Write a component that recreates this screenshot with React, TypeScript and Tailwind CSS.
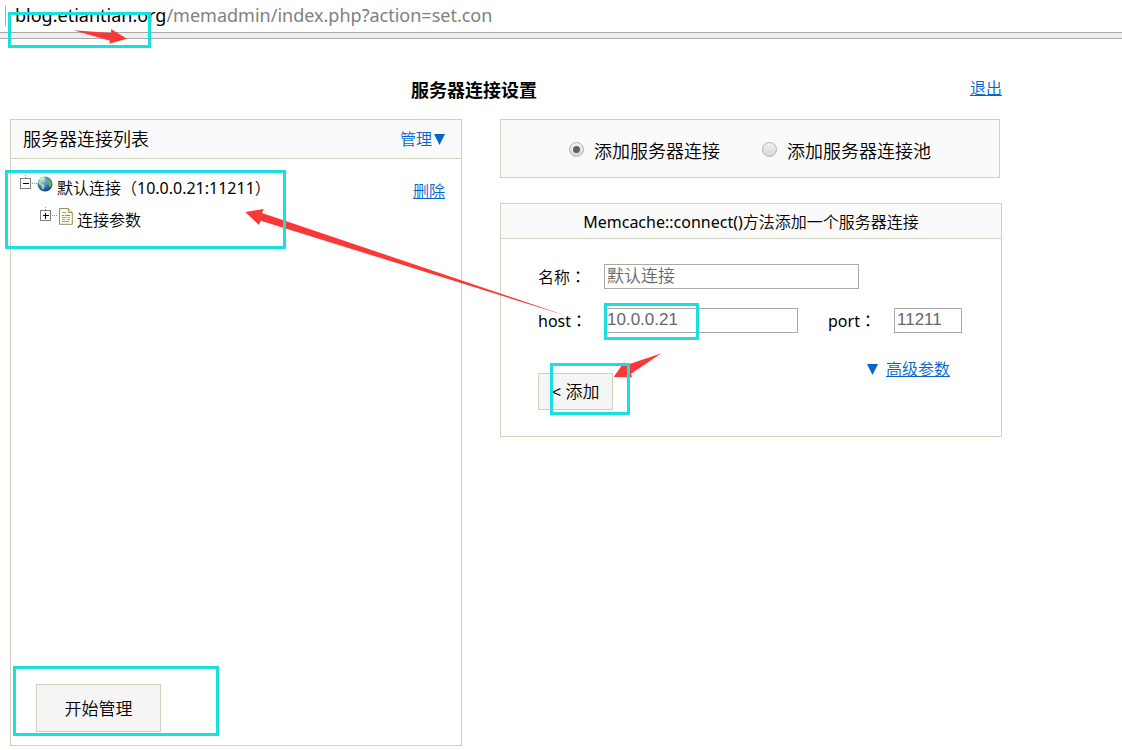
import type { ReactNode } from "react";

const link = "text-base text-[#0066cc]";
const field =
  "h-[25px] border border-[#a9a9a9] bg-white pl-[2px] font-['Liberation_Sans','Noto_Sans_CJK_SC_DemiLight','Noto_Sans_CJK_SC',sans-serif] text-[17px] text-[#666] outline-none";
const panel = "border border-[#d0d1bc]";

function AddressBar() {
  return (
    <header>
      <div className="flex h-8 items-center pl-[5px] text-lg leading-8">
        <span className="h-5 border-l border-[#a9a9a9] pl-[9px]" />
        <span className="whitespace-nowrap pb-[2px] text-black">
          blog.etiantian.org
          <span className="text-[#808080]">/memadmin/index.php?action=set.con</span>
        </span>
      </div>
      <div className="h-[7px] border-y border-[#a9a9a9] bg-[#f0f0f0]" />
    </header>
  );
}

function Toggle({ open }: { open?: boolean }) {
  return (
    <svg width="18" height="20" viewBox="0 0 18 20" shapeRendering="crispEdges">
      <path d="M6.5 0v4M13 8.5h5" stroke="#999" strokeDasharray="1 1" />
      <rect x="1.5" y="3.5" width="10" height="10" fill="#fff" stroke="#808080" />
      <path d={open ? "M4 8.5h6" : "M4 8.5h6M6.5 6v6"} stroke="#000" strokeWidth="1" />
    </svg>
  );
}

function Globe() {
  return (
    <svg width="16" height="18" viewBox="0 -1 16 18">
      <defs>
        <radialGradient id="sea" cx="0.35" cy="0.25" r="0.8">
          <stop offset="0" stopColor="#a9cdf2" />
          <stop offset="0.5" stopColor="#3c7fd0" />
          <stop offset="1" stopColor="#123c86" />
        </radialGradient>
      </defs>
      <circle cx="8" cy="8" r="7.5" fill="url(#sea)" />
      <path d="M1.5 5 4 2l3-.8 2 .7-1.5 1.5.2 1.3-2 1.5-1.5.3.6 1.2 1.9.6 1.3 1.7-1.2 1.9-.9 2-1-1.8-.4-2.1L3 8.8 1.5 7.5z" fill="#a6dc8d" />
      <path d="m10.5 3 2 .2 1.6 2.2.5 2.8-1 2.8-1.3.3-.5-2.2-1.8-1.4.1-2.2z" fill="#62b548" />
      <path d="m3 3.5 2.5-2 2.3.1L5.5 4.5z" fill="#e4f4ee" opacity=".8" />
    </svg>
  );
}

function Page() {
  return (
    <svg width="16" height="18" viewBox="-2 -1 16 18">
      <path d="M.5.5h8.8l4 4v11.8H.5z" fill="#fffdf0" stroke="#a08c5b" />
      <path d="M9.3.5v4h4" fill="#efe2b8" stroke="#a08c5b" />
      <path d="M3 4.5h4M3 11.5h3M8 11.5h3M3 13.5h7" stroke="#93a68a" />
      <path d="M3 7.5h2M6 7.5h5" stroke="#d56b5c" />
      <path d="M3 9.5h5M9 9.5h2" stroke="#9ba99b" />
    </svg>
  );
}

function ConnectionList() {
  return (
    <section className={`${panel} flex h-[627px] flex-col`}>
      <div className="flex h-[39px] items-center justify-between border-b border-[#d0d1bc] bg-[#fafafa] pl-3 pr-4">
        <h2 className="text-lg leading-6">服务器连接列表</h2>
        <button className={`${link} flex items-center gap-[2px]`}>
          管理
          <Triangle />
        </button>
      </div>
      <div className="flex items-start justify-between pl-2 pr-4 pt-4">
        <ul className="text-base leading-6">
          <li>
            <div className="flex h-8 items-start">
              <Toggle open />
              <Globe />
              <span className="pl-1 pt-px">默认连接（10.0.0.21:11211）</span>
            </div>
            <ul className="pl-5">
              <li className="flex h-8 items-start">
                <Toggle />
                <Page />
                <span className="pl-1 pt-px">连接参数</span>
              </li>
            </ul>
          </li>
        </ul>
        <a href="#delete" className={`${link} pt-1 underline`}>
          删除
        </a>
      </div>
      <div className="mt-auto pb-[13px] pl-[25px]">
        <button className={`${panel} h-12 w-[125px] bg-[#f5f5f5] pt-[2px] text-[17px]`}>开始管理</button>
      </div>
    </section>
  );
}

function Triangle() {
  return (
    <svg width="11" height="11" viewBox="0 0 11 11">
      <path d="M0 0h11L5.5 11z" fill="#0066cc" />
    </svg>
  );
}

function Radio({ checked, children }: { checked?: boolean; children: ReactNode }) {
  return (
    <label className="flex items-center gap-[10px] text-lg leading-6">
      <span className="grid place-items-center pb-[3px]">
        <input
          type="radio"
          name="mode"
          defaultChecked={checked}
          className="peer col-start-1 row-start-1 size-[15px] appearance-none rounded-full border border-[#b0b0b0] bg-linear-to-b from-[#f2f2f2] to-[#d8d8d8]"
        />
        <span className="pointer-events-none col-start-1 row-start-1 hidden size-[7px] rounded-full bg-[#606060] peer-checked:block" />
      </span>
      {children}
    </label>
  );
}

function FieldLabel({ htmlFor, children }: { htmlFor: string; children: string }) {
  return (
    <label htmlFor={htmlFor} className="w-[66px] leading-6">
      {children}
      <span className="font-['Noto_Sans_CJK_TC',sans-serif]">：</span>
    </label>
  );
}

function ConnectionForm() {
  return (
    <section className={panel}>
      <h2 className="h-[35px] border-b border-[#d0d1bc] bg-[#fafafa] text-center text-base leading-[36px]">
        Memcache::connect()方法添加一个服务器连接
      </h2>
      <form className="pb-[26px] pl-[37px] pr-[39px] pt-[25px] text-base">
        <div className="flex h-[25px] items-center">
          <FieldLabel htmlFor="name">名称</FieldLabel>
          <input id="name" defaultValue="默认连接" className={`${field} w-[255px]`} />
        </div>
        <div className="mt-[19px] flex h-[25px] items-start">
          <FieldLabel htmlFor="host">host</FieldLabel>
          <input id="host" defaultValue="10.0.0.21" className={`${field} w-[194px] pb-[2px] pl-1`} />
          <div className="ml-auto flex items-start">
            <FieldLabel htmlFor="port">port</FieldLabel>
            <input id="port" defaultValue="11211" className={`${field} w-[68px] pb-[2px]`} />
          </div>
        </div>
        <div className="mt-6 flex items-start justify-between pr-3">
          <button type="button" className={`${panel} mt-4 h-[37px] w-[75px] bg-[#f5f5f5] text-[17px]`}>
            &lt; 添加
          </button>
          <a href="#advanced" className={`${link} flex items-center gap-2`}>
            <Triangle />
            <span className="underline">高级参数</span>
          </a>
        </div>
      </form>
    </section>
  );
}

function Annotations() {
  const box = "absolute border-3 border-[#1bdfdc]";
  return (
    <div className="pointer-events-none absolute inset-0" aria-hidden="true">
      <svg className="absolute left-0 top-0" width="700" height="400" viewBox="0 0 700 400" fill="#fb3838">
        <path d="M73.5 30.2 111.3 33 111 29 127 38.7 109.3 43.8 110 40.7z" />
        <path d="M245.3 212 263.7 209 262 213 567 316 260.7 220.7 259 225z" />
        <path d="M613.7 377 624 362.3 626 365.3 661.5 353.3 631 373.7 632 377.3z" />
      </svg>
      <div className={`${box} left-[8px] top-[12px] h-[36px] w-[143px]`} />
      <div className={`${box} left-[5px] top-[170px] h-[79px] w-[281px]`} />
      <div className={`${box} left-[604px] top-[303px] h-[37px] w-[95px]`} />
      <div className={`${box} left-[550px] top-[363px] h-[52px] w-[80px]`} />
      <div className={`${box} left-[13px] top-[666px] h-[70px] w-[206px]`} />
    </div>
  );
}

export default function App() {
  return (
    <div className="relative bg-white pb-1 font-['Noto_Sans','Noto_Sans_CJK_SC_DemiLight','Noto_Sans_CJK_SC',sans-serif] text-black">
      <AddressBar />
      <main className="ml-[10px] max-w-[992px]">
        <div className="flex h-20 items-center">
          <h1 className="flex-1 pt-5 text-center font-['Noto_Sans_CJK_SC',sans-serif] text-lg font-bold">
            服务器连接设置
          </h1>
          <a href="#logout" className={`${link} ml-8 pt-[18px] underline`}>
            退出
          </a>
        </div>
        <div className="grid grid-cols-[452px_1fr] items-start gap-[38px]">
          <ConnectionList />
          <div className="flex flex-col gap-[25px]">
            <div
              role="radiogroup"
              className={`${panel} mr-[2px] flex h-[59px] items-center justify-center gap-[42px] bg-[#fafafa] pt-1`}
            >
              <Radio checked>添加服务器连接</Radio>
              <Radio>添加服务器连接池</Radio>
            </div>
            <ConnectionForm />
          </div>
        </div>
      </main>
      <Annotations />
    </div>
  );
}
